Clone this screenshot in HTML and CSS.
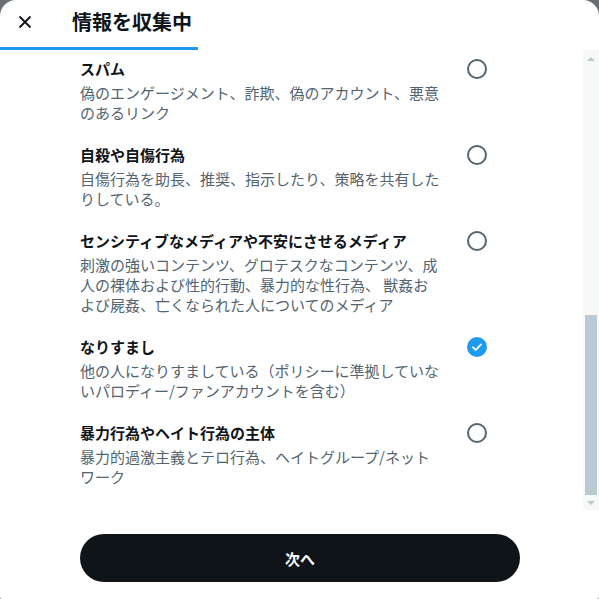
FILE: index.html
```html
<!DOCTYPE html>
<html lang="ja">
<head>
  <meta charset="UTF-8" />
  <meta name="viewport" content="width=device-width, initial-scale=1.0"/>
  <title>情報を収集中</title>
  <link rel="stylesheet" href="styles.css">
</head>
<body>
  <div class="dialog">
    <div class="dialog-header">
      <div class="header-row">
        <button class="close-btn" aria-label="閉じる">
          <svg width="20" height="20" viewBox="0 0 20 20"><path d="M4.5 4.5 L15.5 15.5 M15.5 4.5 L4.5 15.5" stroke="#0f1419" stroke-width="1.8" fill="none"/></svg>
        </button>
        <h1>情報を収集中</h1>
      </div>
      <div class="progress"><div class="progress-bar"></div></div>
    </div>

    <div class="dialog-body">
      <ul class="options">
        <li class="option">
          <div class="option-text">
            <div class="option-title">スパム</div>
            <div class="option-desc">偽のエンゲージメント、詐欺、偽のアカウント、悪意のあるリンク</div>
          </div>
          <span class="radio"></span>
        </li>
        <li class="option">
          <div class="option-text">
            <div class="option-title">自殺や自傷行為</div>
            <div class="option-desc">自傷行為を助長、推奨、指示したり、策略を共有したりしている。</div>
          </div>
          <span class="radio"></span>
        </li>
        <li class="option">
          <div class="option-text">
            <div class="option-title">センシティブなメディアや不安にさせるメディア</div>
            <div class="option-desc">刺激の強いコンテンツ、グロテスクなコンテンツ、成人の裸体および性的行動、暴力的な性行為、 獣姦および屍姦、亡くなられた人についてのメディア</div>
          </div>
          <span class="radio"></span>
        </li>
        <li class="option">
          <div class="option-text">
            <div class="option-title">なりすまし</div>
            <div class="option-desc">他の人になりすましている（ポリシーに準拠していないパロディー/ファンアカウントを含む）</div>
          </div>
          <span class="radio checked">
            <svg width="20" height="20" viewBox="0 0 20 20"><polyline points="6,10.3 8.8,13 14,7.4" stroke="#fff" stroke-width="1.8" fill="none" stroke-linecap="round" stroke-linejoin="round"/></svg>
          </span>
        </li>
        <li class="option">
          <div class="option-text">
            <div class="option-title">暴力行為やヘイト行為の主体</div>
            <div class="option-desc">暴力的過激主義とテロ行為、ヘイトグループ/ネットワーク</div>
          </div>
          <span class="radio"></span>
        </li>
      </ul>

      <div class="scrollbar">
        <span class="arrow arrow-up"></span>
        <div class="track"><div class="thumb"></div></div>
        <span class="arrow arrow-down"></span>
      </div>
    </div>

    <div class="dialog-footer">
      <button class="next-btn">次へ</button>
    </div>
  </div>
</body>
</html>
```

FILE: styles.css
```css
body {
  margin: 0;
  background: #6b6f73;
  font-family: "Noto Sans CJK JP", "Noto Sans", sans-serif;
  color: #0f1419;
}

.dialog {
  width: 599px;
  height: 599px;
  background: #fff;
  border-radius: 16px 16px 2px 2px;
  display: flex;
  flex-direction: column;
  overflow: hidden;
}

.dialog-header {
  height: 50px;
  display: flex;
  flex-direction: column;
}

.header-row {
  height: 47px;
  display: flex;
  align-items: center;
  padding-left: 15px;
}

.close-btn {
  width: 20px;
  height: 20px;
  padding: 0;
  border: none;
  background: none;
  display: flex;
  margin-top: -3px;
}

.header-row h1 {
  margin: -4px 0 0 37px;
  font-size: 20px;
  font-weight: bold;
  line-height: 24px;
}

.progress {
  height: 3px;
}

.progress-bar {
  width: 33%;
  height: 3px;
  background: #1d9bf0;
}

.dialog-body {
  height: 460px;
  display: flex;
}

.options {
  flex: 1;
  list-style: none;
  margin: 0;
  padding: 0 96px 0 80px;
  overflow: hidden;
}

.option {
  display: flex;
  align-items: flex-start;
  gap: 26px;
  padding: 9px 0 13px;
}

.option-text {
  width: 361px;
}

.option-title {
  font-size: 15px;
  font-weight: bold;
  line-height: 20px;
}

.option-desc {
  margin-top: 4px;
  font-size: 15px;
  line-height: 20px;
  color: #536471;
  line-break: strict;
}

.radio {
  width: 20px;
  height: 20px;
  box-sizing: border-box;
  border: 2px solid #536471;
  border-radius: 50%;
  display: flex;
}

.radio.checked {
  border: none;
  background: #1d9bf0;
}

.scrollbar {
  width: 16px;
  background: #f7f9f9;
  display: flex;
  flex-direction: column;
  align-items: center;
}

.arrow {
  width: 0;
  height: 0;
  border-left: 4px solid transparent;
  border-right: 4px solid transparent;
}

.arrow-up {
  margin: 7px 0 5px;
  border-bottom: 4px solid #b9cad3;
}

.arrow-down {
  margin: 6px 0 5px;
  border-top: 4px solid #b9cad3;
}

.track {
  flex: 1;
  width: 12px;
  display: flex;
  flex-direction: column;
  justify-content: flex-end;
}

.thumb {
  height: 180px;
  background: #b9cad3;
}

.dialog-footer {
  flex: 1;
  padding: 24px 79px 0 80px;
}

.next-btn {
  width: 100%;
  height: 48px;
  border: none;
  border-radius: 24px;
  background: #0f1419;
  color: #fff;
  font-family: "Noto Sans CJK JP", "Noto Sans", sans-serif;
  font-size: 15px;
  font-weight: bold;
}
```
